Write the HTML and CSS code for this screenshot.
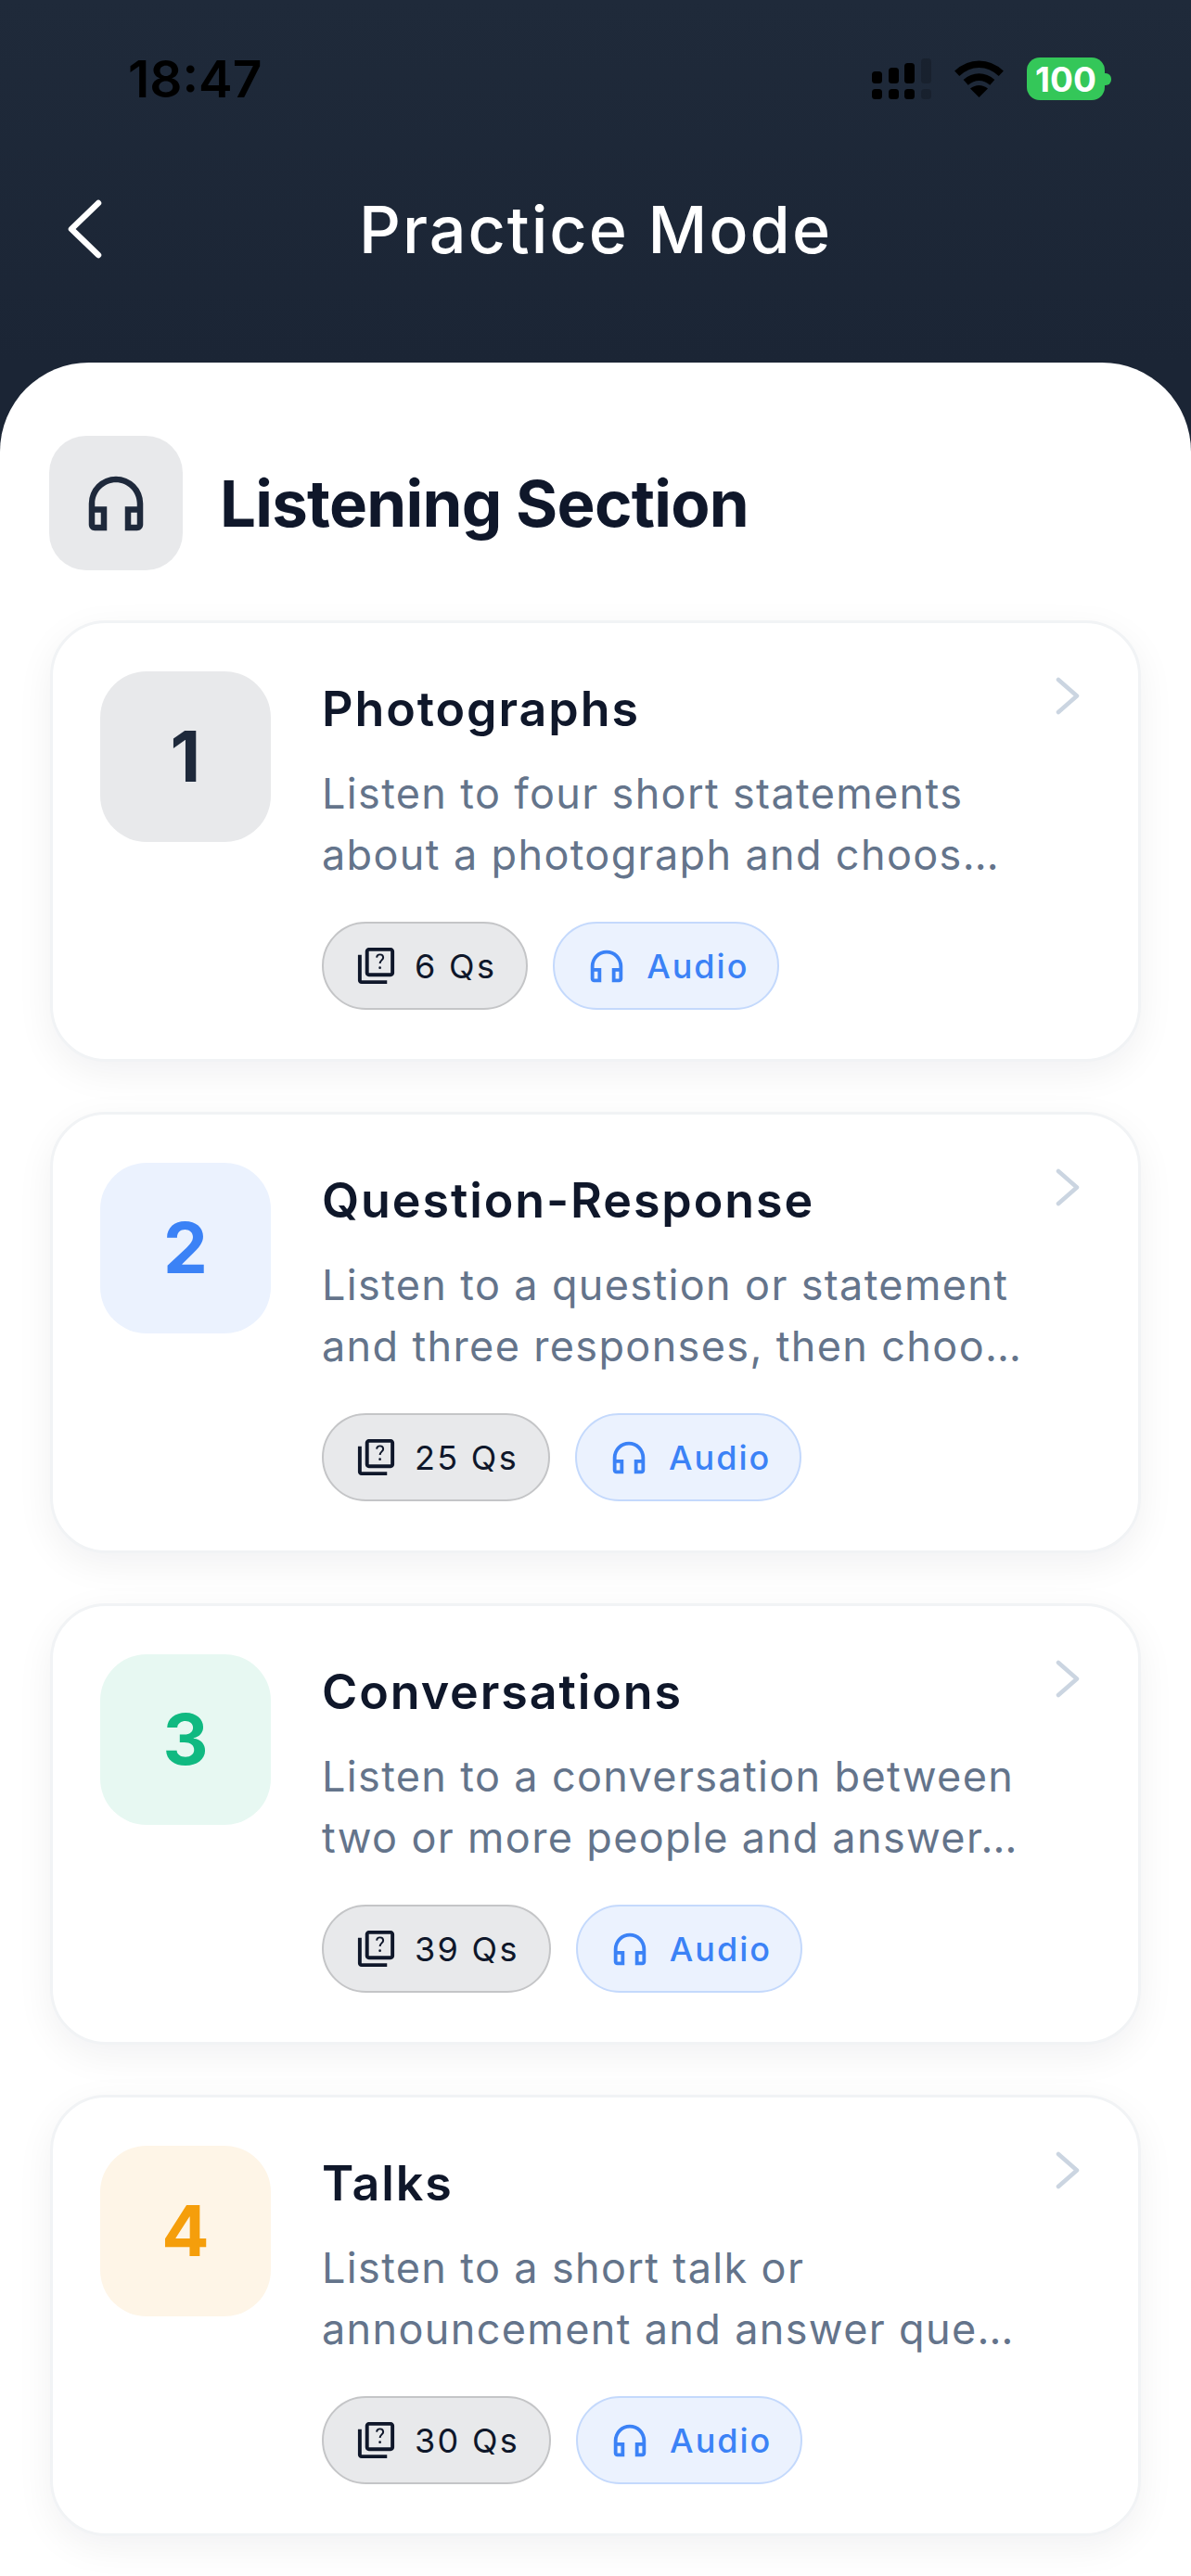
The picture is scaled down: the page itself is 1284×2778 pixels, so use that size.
FILE: index.html
```html
<!DOCTYPE html>
<html lang="en">
<head>
    <meta charset="UTF-8">
    <meta name="viewport" content="width=device-width, initial-scale=1.0">
    <title>Practice Mode</title>
    <link rel="stylesheet" href="styles.css">
</head>
<body>
    <svg class="icon-defs" width="0" height="0">
        <symbol id="headphones" viewBox="0 0 24 24">
            <path d="M12 3a9 9 0 0 0-9 9v7c0 1.100.9 2 2 2h4v-8H5v-1c0-3.870 3.130-7 7-7s7 3.130 7 7v1h-4v8h4c1.100 0 2-.9 2-2v-7a9 9 0 0 0-9-9zM7 15v4H5v-4h2zm12 4h-2v-4h2v4z" fill="currentColor"/>
        </symbol>
        <symbol id="quiz" viewBox="0 0 24 24">
            <path d="M4 6H2v14c0 1.100.9 2 2 2h14v-2H4V6zm16-4H8c-1.100 0-2 .9-2 2v12c0 1.100.9 2 2 2h12c1.100 0 2-.9 2-2V4c0-1.100-.9-2-2-2zm0 14H8V4h12v12z" fill="currentColor"/>
            <path d="M12.300 7.500c.1-1.100.9-1.700 1.800-1.700 1 0 1.800.7 1.800 1.700 0 1.300-1.800 1.500-1.800 3.200" fill="none" stroke="currentColor" stroke-width="1"/>
            <circle cx="14.100" cy="13.100" r=".7" fill="currentColor"/>
        </symbol>
        <symbol id="chevron" viewBox="0 0 27 41">
            <path d="M3 3l20 17.500L3 38" fill="none" stroke="currentColor" stroke-width="4.500" stroke-linecap="round" stroke-linejoin="round"/>
        </symbol>
    </svg>

    <div id="container">
        <header class="top">
            <div class="status">
                <span class="time">18:47</span>
                <div class="status-right">
                    <svg class="signal" width="64" height="44" viewBox="0 0 64 44">
                        <rect x="0" y="14" width="11" height="13" rx="3.500"/>
                        <rect x="18" y="10" width="11" height="17" rx="3.500"/>
                        <rect x="35" y="5" width="11" height="22" rx="3.500"/>
                        <rect class="off" x="53" y="0" width="11" height="27" rx="3.500"/>
                        <rect x="0" y="33" width="11" height="11" rx="3.500"/>
                        <rect x="18" y="33" width="11" height="11" rx="3.500"/>
                        <rect x="35" y="33" width="11" height="11" rx="3.500"/>
                        <rect class="off" x="53" y="33" width="11" height="11" rx="3.500"/>
                    </svg>
                    <svg class="wifi" width="55" height="40" viewBox="0 0 56 42">
                        <path d="M3 15C18 1 38 1 53 15" fill="none" stroke="#000" stroke-width="8"/>
                        <path d="M13 25c9-8 21-8 30 0" fill="none" stroke="#000" stroke-width="8"/>
                        <path d="M18 32c6-5 14-5 20 0L28 42z"/>
                    </svg>
                    <div class="battery">
                        <span class="battery-body">100</span>
                        <span class="battery-tip"></span>
                    </div>
                </div>
            </div>
            <div class="nav">
                <svg class="back" width="38" height="64" viewBox="0 0 38 64">
                    <path d="M33 4L4 32l29 28" fill="none" stroke="#fff" stroke-width="6.500" stroke-linecap="round" stroke-linejoin="round"/>
                </svg>
                <h1>Practice Mode</h1>
            </div>
        </header>

        <main class="sheet">
            <div class="section-head">
                <div class="section-icon"><svg width="78" height="78"><use href="#headphones"/></svg></div>
                <h2>Listening Section</h2>
            </div>

            <section class="card">
                <div class="num num-gray">1</div>
                <div class="card-body">
                    <h3>Photographs</h3>
                    <p>Listen to four short statements about a photograph and choos…</p>
                    <div class="chips">
                        <span class="chip chip-gray"><svg width="47" height="47"><use href="#quiz"/></svg>6 Qs</span>
                        <span class="chip chip-blue"><svg width="46" height="46"><use href="#headphones"/></svg>Audio</span>
                    </div>
                </div>
                <svg class="arrow" width="27" height="41"><use href="#chevron"/></svg>
            </section>

            <section class="card">
                <div class="num num-blue">2</div>
                <div class="card-body">
                    <h3>Question-Response</h3>
                    <p>Listen to a question or statement and three responses, then choo…</p>
                    <div class="chips">
                        <span class="chip chip-gray"><svg width="47" height="47"><use href="#quiz"/></svg>25 Qs</span>
                        <span class="chip chip-blue"><svg width="46" height="46"><use href="#headphones"/></svg>Audio</span>
                    </div>
                </div>
                <svg class="arrow" width="27" height="41"><use href="#chevron"/></svg>
            </section>

            <section class="card">
                <div class="num num-green">3</div>
                <div class="card-body">
                    <h3>Conversations</h3>
                    <p>Listen to a conversation between two or more people and answer…</p>
                    <div class="chips">
                        <span class="chip chip-gray"><svg width="47" height="47"><use href="#quiz"/></svg>39 Qs</span>
                        <span class="chip chip-blue"><svg width="46" height="46"><use href="#headphones"/></svg>Audio</span>
                    </div>
                </div>
                <svg class="arrow" width="27" height="41"><use href="#chevron"/></svg>
            </section>

            <section class="card">
                <div class="num num-orange">4</div>
                <div class="card-body">
                    <h3>Talks</h3>
                    <p>Listen to a short talk or announcement and answer que…</p>
                    <div class="chips">
                        <span class="chip chip-gray"><svg width="47" height="47"><use href="#quiz"/></svg>30 Qs</span>
                        <span class="chip chip-blue"><svg width="46" height="46"><use href="#headphones"/></svg>Audio</span>
                    </div>
                </div>
                <svg class="arrow" width="27" height="41"><use href="#chevron"/></svg>
            </section>
        </main>
    </div>
</body>
</html>
```

FILE: styles.css
```css
* { box-sizing: border-box; margin: 0; padding: 0; }
html, body { height: 100%; }
body { background: #fff; font-family: Inter, "Noto Sans", sans-serif; color: #0f172a; overflow: hidden; }
.icon-defs { display: block; }
#container { width: 1284px; height: 2778px; overflow: hidden; background: #1b2535; }

.top { height: 391px; background: linear-gradient(#1f2a3a, #1b2535); padding-top: 50px; }
.status { display: flex; justify-content: space-between; align-items: center; height: 70px; padding: 0 86px 0 138px; }
.time { font-size: 55px; font-weight: 600; color: #000; }
.status-right { display: flex; align-items: center; gap: 24px; }
.signal { fill: #000; }
.signal .off { fill: #000; opacity: .18; }
.battery { display: flex; align-items: center; }
.battery-body { display: flex; align-items: center; justify-content: center; width: 84px; height: 46px; background: #34c759; border-radius: 14px; color: #fff; font-size: 37px; font-weight: 700; }
.battery-tip { width: 7px; height: 13px; background: #34c759; border-radius: 0 6px 6px 0; }

.nav { display: flex; justify-content: center; align-items: center; height: 96px; margin-top: 79px; position: relative; }
.back { position: absolute; left: 73px; top: 16px; }
h1 { font-size: 70px; font-weight: 500; color: #fff; letter-spacing: 2px; }

.sheet { background: #fff; border-radius: 96px 96px 0 0; padding: 79px 0 0 53px; height: 2387px; }
.section-head { display: flex; align-items: center; gap: 40px; margin-bottom: 54px; }
.section-icon { display: flex; align-items: center; justify-content: center; width: 144px; height: 145px; border-radius: 40px; background: #e8e9eb; color: #1e293b; }
h2 { font-size: 69px; font-weight: 700; letter-spacing: -.750px; color: #0f172a; }

.card { display: flex; width: 1176px; height: 476px; margin: 0 0 54px 1px; padding: 52px 62px 0 51px; background: #fff; border: 3px solid #f1f3f5; border-radius: 60px; box-shadow: 0 12px 40px rgba(15, 23, 42, .06); }
.num { flex: none; display: flex; align-items: center; justify-content: center; width: 184px; height: 184px; padding-bottom: 2px; border-radius: 50px; font-size: 76px; font-weight: 700; }
.num-gray { background: #e8e9eb; color: #1e293b; }
.num-blue { background: #ebf2fe; color: #3b82f6; }
.num-green { background: #e7f8f2; color: #10b981; }
.num-orange { background: #fef5e7; color: #f59e0b; }

.card-body { flex: 1; min-width: 0; margin-left: 55px; }
h3 { font-size: 52px; font-weight: 600; letter-spacing: 1.900px; line-height: 60px; margin-top: 11px; }
.card-body p { margin-top: 28px; font-size: 45px; line-height: 66px; letter-spacing: 1.350px; color: #64748b; }
.chips { display: flex; gap: 27px; margin-top: 39px; }
.chip { display: flex; align-items: center; height: 95px; border-radius: 48px; font-size: 36px; border: 2px solid; }
.chip-gray { gap: 18px; padding: 0 32px 0 33px; letter-spacing: 2.300px; background: #e8e9eb; border-color: #c4c5c7; color: #0f172a; }
.chip-blue { gap: 20px; padding: 0 31px 0 33px; letter-spacing: 2px; background: #ebf2fe; border-color: #c4d9fc; color: #3b82f6; font-weight: 500; }
.arrow { flex: none; margin-top: 6px; color: #cbd5e1; }
```
